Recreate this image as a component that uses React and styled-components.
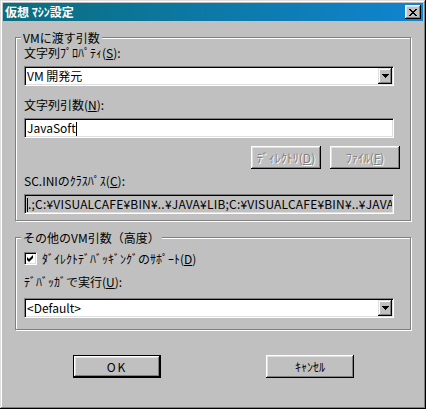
import React from 'react'
import styled, { createGlobalStyle } from 'styled-components'

const Global = createGlobalStyle`
  html, body {
    margin: 0;
    background: #c0c0c0;
  }
  body {
    font-family: "Noto Sans CJK JP", "Liberation Sans", sans-serif;
    font-size: 12px;
    color: #000;
  }
`

const Window = styled.div`
  width: 426px;
  height: 409px;
  box-sizing: border-box;
  padding: 3px;
  background: #c0c0c0;
  box-shadow: inset -1px -1px #000, inset 1px 1px #dfdfdf,
    inset -2px -2px #808080, inset 2px 2px #fff;
  display: flex;
  flex-direction: column;
`

const TitleBar = styled.div`
  height: 18px;
  padding: 0 2px;
  display: flex;
  align-items: center;
  justify-content: space-between;
  background: linear-gradient(to right, #0a6e7e, #1084d0);
  color: #fff;
  font-weight: bold;
  line-height: 18px;
`

const CloseBtn = styled.div`
  width: 16px;
  height: 14px;
  box-sizing: border-box;
  background: #c0c0c0;
  box-shadow: inset -1px -1px #000, inset 1px 1px #fff,
    inset -2px -2px #808080, inset 2px 2px #dfdfdf;
  display: flex;
  align-items: center;
  justify-content: center;
  padding-right: 1px;
`

const Body = styled.div`
  padding: 0 12px;
  display: flex;
  flex-direction: column;
`

const Group = styled.fieldset`
  margin: ${p => p.$top}px 0 0 0;
  padding: 0 16px ${p => p.$bottom}px 8px;
  border: 1px solid #808080;
  box-shadow: inset 1px 1px #fff, 1px 1px #fff;
  min-width: 0;
  display: flex;
  flex-direction: column;
`

const Legend = styled.legend`
  margin-left: -3px;
  padding: 0 2px;
  line-height: 13px;
  background: #c0c0c0;
`

const Label = styled.div`
  margin-top: ${p => p.$top}px;
  height: 13px;
  line-height: 13px;
  white-space: nowrap;
`

const Field = styled.div`
  margin-top: ${p => p.$top}px;
  height: 20px;
  box-sizing: border-box;
  border: 1px solid;
  border-color: #808080 #fff #fff #808080;
  box-shadow: inset 1px 1px #000, inset -1px -1px #dfdfdf;
  background: ${p => (p.$readonly ? '#c0c0c0' : '#fff')};
  padding: 1px 1px 1px 2px;
  display: flex;
  align-items: center;
  overflow: hidden;
  white-space: nowrap;
  line-height: 16px;
`

const Value = styled.span`
  flex: 1;
  overflow: hidden;
  letter-spacing: ${p => (p.$spacing ? p.$spacing : '0')};
`

const Caret = styled.span`
  display: inline-block;
  width: 1px;
  height: 14px;
  background: #000;
  vertical-align: middle;
  margin-top: -2px;
`

const DropBtn = styled.div`
  width: 14px;
  height: 16px;
  box-sizing: border-box;
  background: #c0c0c0;
  box-shadow: inset -1px -1px #000, inset 1px 1px #dfdfdf,
    inset -2px -2px #808080, inset 2px 2px #fff;
  display: flex;
  align-items: center;
  justify-content: center;
  flex: none;
`

const ButtonRow = styled.div`
  margin-top: ${p => p.$top}px;
  margin-right: ${p => p.$right || 0}px;
  display: flex;
  justify-content: ${p => p.$justify || 'flex-start'};
  gap: ${p => p.$gap}px;
  padding-left: ${p => p.$left || 0}px;
`

const Button = styled.div`
  width: ${p => p.$w}px;
  height: 23px;
  box-sizing: border-box;
  background: #c0c0c0;
  border: ${p => (p.$default ? '1px solid #000' : 'none')};
  box-shadow: inset -1px -1px #000, inset 1px 1px #fff,
    inset -2px -2px #808080, inset 2px 2px #dfdfdf;
  display: flex;
  align-items: center;
  justify-content: center;
  white-space: nowrap;
  color: ${p => (p.$disabled ? '#808080' : '#000')};
  text-shadow: ${p => (p.$disabled ? '1px 1px #fff' : 'none')};
  letter-spacing: ${p => (p.$spaced ? '2px' : '0')};
`

const CheckRow = styled.div`
  margin-top: ${p => p.$top}px;
  display: flex;
  align-items: center;
  gap: 5px;
  height: 13px;
  line-height: 13px;
  white-space: nowrap;
`

const CheckBox = styled.div`
  width: 13px;
  height: 13px;
  box-sizing: border-box;
  background: #fff;
  border: 1px solid;
  border-color: #808080 #fff #fff #808080;
  box-shadow: inset 1px 1px #000, inset -1px -1px #dfdfdf;
  display: flex;
  align-items: center;
  justify-content: center;
  flex: none;
`

const Arrow = () => (
  <svg width='7' height='4' viewBox='0 0 7 4'>
    <path d='M0 0h7v1h-1v1h-1v1h-1v1h-1v-1h-1v-1h-1v-1h-1z' fill='#000' />
  </svg>
)

const CloseGlyph = () => (
  <svg width='8' height='7' viewBox='0 0 8 7'>
    <path
      d='M0 0h2v1h1v1h2v-1h1v-1h2v1h-1v1h-1v1h-1v1h1v1h1v1h1v1h-2v-1h-1v-1h-2v1h-1v1h-2v-1h1v-1h1v-1h1v-1h-1v-1h-1v-1h-1z'
      fill='#000'
    />
  </svg>
)

const Check = () => (
  <svg width='7' height='7' viewBox='0 0 7 7'>
    <path d='M6 0v3l-4 4l-2-2v-3l2 2z' fill='#000' />
  </svg>
)

const Combo = ({ top, children }) => (
  <Field $top={top}>
    <Value>{children}</Value>
    <DropBtn><Arrow /></DropBtn>
  </Field>
)

const path = '.;C:¥VISUALCAFE¥BIN¥..¥JAVA¥LIB;C:¥VISUALCAFE¥BIN¥..¥JAVA¥LIB'

function App () {
  return (
    <Window>
      <Global />
      <TitleBar>
        <span>仮想 ﾏｼﾝ設定</span>
        <CloseBtn><CloseGlyph /></CloseBtn>
      </TitleBar>
      <Body>
        <Group $top={10} $bottom={6}>
          <Legend>VMに渡す引数</Legend>
          <Label $top={2}>文字列ﾌﾟﾛﾊﾟﾃｨ(<u>S</u>):</Label>
          <Combo top={7}>VM 開発元</Combo>
          <Label $top={12}>文字列引数(<u>N</u>):</Label>
          <Field $top={7}>
            <Value>JavaSoft<Caret /></Value>
          </Field>
          <ButtonRow $top={8} $gap={9} $justify='flex-end' $right={-6}>
            <Button $w={70} $disabled>ﾃﾞｨﾚｸﾄﾘ(<u>D</u>)</Button>
            <Button $w={70} $disabled>ﾌｧｲﾙ(<u>F</u>)</Button>
          </ButtonRow>
          <Label $top={5}>SC.INIのｸﾗｽﾊﾟｽ(<u>C</u>):</Label>
          <Field $top={7} $readonly>
            <Value $spacing='0.2px'><Caret />{path}</Value>
          </Field>
        </Group>
        <Group $top={10} $bottom={11}>
          <Legend>その他のVM引数（高度）</Legend>
          <CheckRow $top={8}>
            <CheckBox><Check /></CheckBox>
            <span>ﾀﾞｲﾚｸﾄﾃﾞﾊﾞｯｷﾞﾝｸﾞのｻﾎﾟｰﾄ(<u>D</u>)</span>
          </CheckRow>
          <Label $top={10}>ﾃﾞﾊﾞｯｶﾞで実行(<u>U</u>):</Label>
          <Combo top={10}>&lt;Default&gt;</Combo>
        </Group>
        <ButtonRow $top={25} $gap={105} $left={58}>
          <Button $w={88} $default $spaced>OK</Button>
          <Button $w={88}>ｷｬﾝｾﾙ</Button>
        </ButtonRow>
      </Body>
    </Window>
  )
}

export default App
